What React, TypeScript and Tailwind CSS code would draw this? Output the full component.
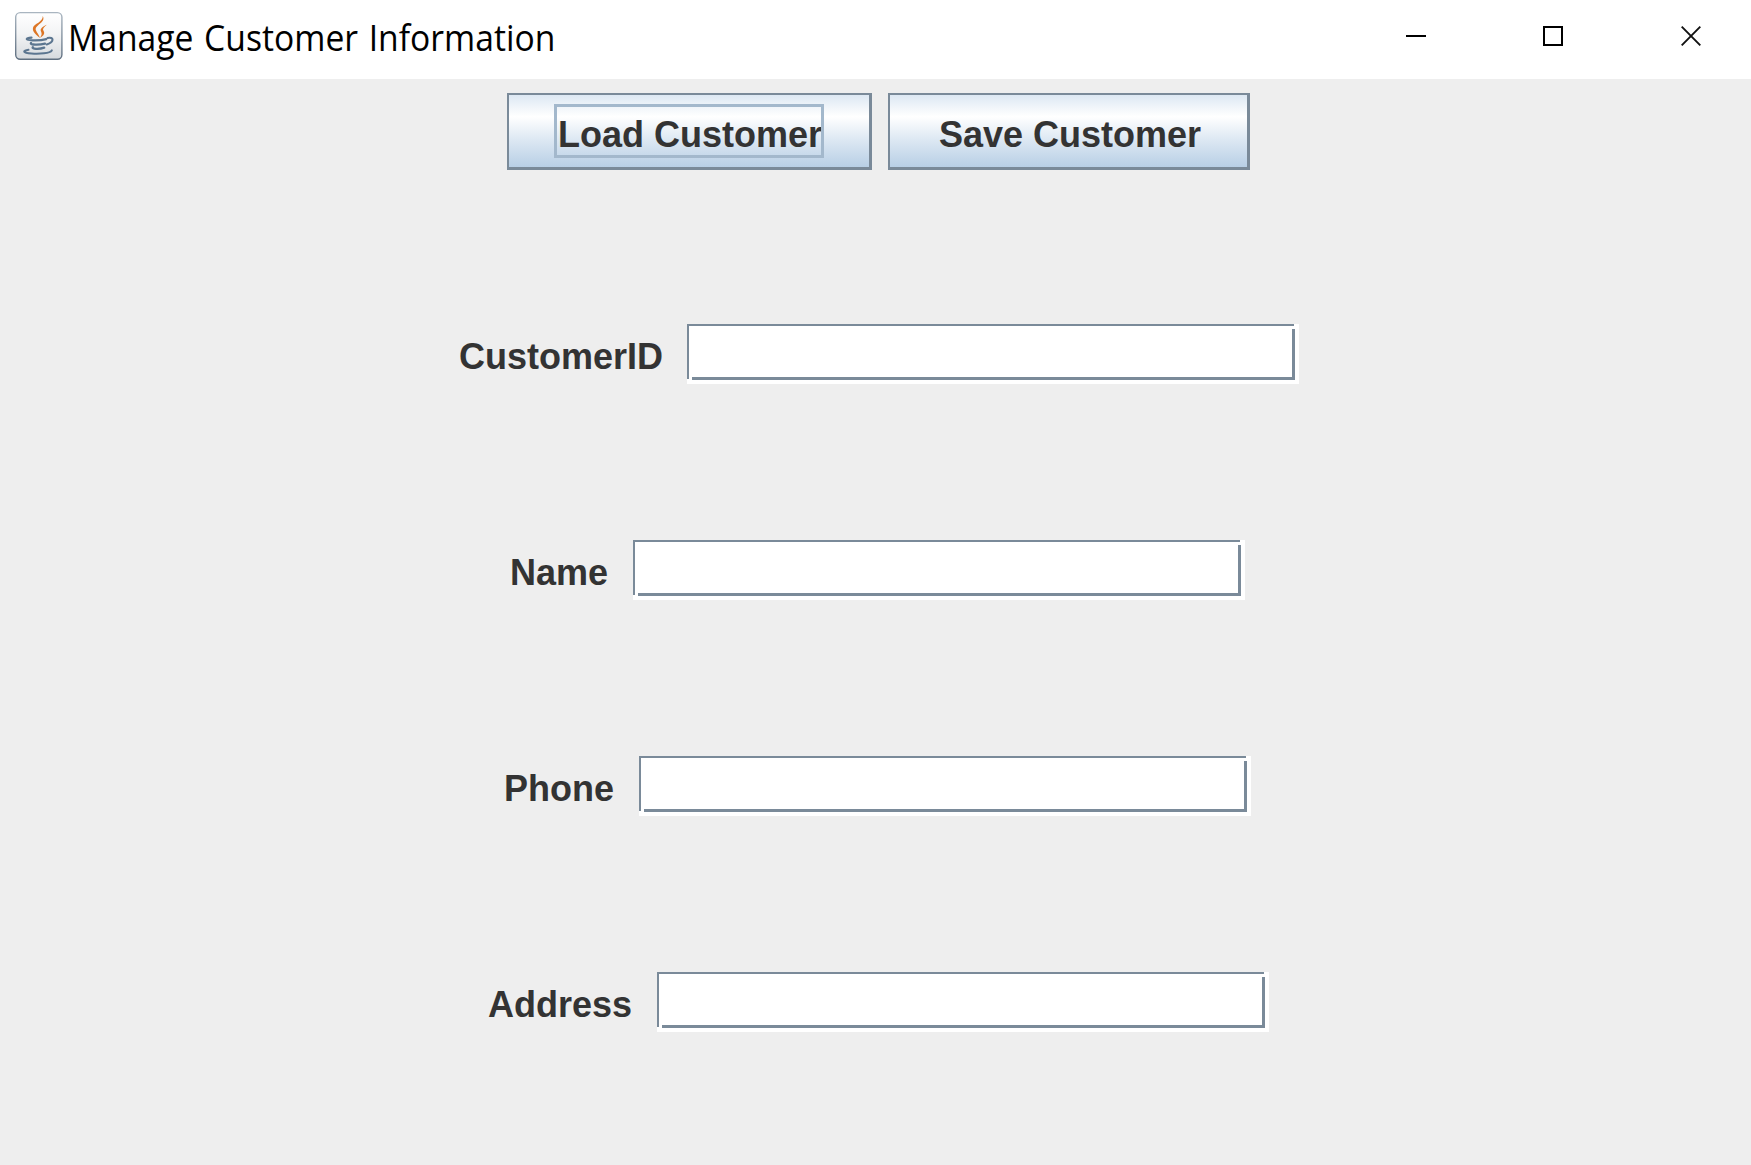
type FieldProps = { label: string; offset: string; labelWidth: string };

function JavaIcon() {
  return (
    <svg className="block h-[50px] w-[50px] shrink-0" viewBox="0 0 50 50" fill="none">
      <defs>
        <linearGradient id="tile" x1="0" y1="0" x2="0" y2="1">
          <stop offset="0" stopColor="#ffffff" />
          <stop offset="0.45" stopColor="#f3f4f5" />
          <stop offset="1" stopColor="#d6dade" />
        </linearGradient>
        <linearGradient id="edge" x1="0" y1="0" x2="0" y2="1">
          <stop offset="0" stopColor="#a9b5c0" />
          <stop offset="1" stopColor="#5f6f80" />
        </linearGradient>
      </defs>
      <rect x="1.7" y="1.6" width="46.2" height="46.6" rx="4.5" fill="url(#tile)" stroke="url(#edge)" strokeWidth="1.4" />
      <path d="M28.800 5c3.600 6.800-9.200 9.200-6.800 14.600 1 2.300 2.800 4.200 4 7.400-4.200-3.400-7.900-6.300-7-10.200.9-4.200 10.200-5.600 9.800-11.800Z" fill="#dd7626" />
      <path d="M32.800 13.800c-3.400 1.400-7.200 3.800-5.800 6.600 1 2 .9 3.600-1 6.400 4.200-2.200 5-4.600 3.500-7-1.300-2.100.9-4.200 3.300-6Z" fill="#dd7626" />
      <g stroke="#5c7690" strokeLinecap="round">
        <path d="M17.500 26.600c-7 .8-5.800 2.400.8 2.700 5.500.2 10.500-.2 14-1.200" strokeWidth="2.200" />
        <path d="M33.500 27c6.600-1.600 7 4-.8 6.400" strokeWidth="2.100" />
        <path d="M17 32c-1.600 2 8 2.300 14 .6" strokeWidth="2.300" />
        <path d="M18.800 36.200c-1.500 1.800 6.200 2.300 11.400.5" strokeWidth="2.300" />
        <path d="M14.500 38.800c-6 1-6.200 3 3 3.800 8 .6 18.500-.2 20.300-3.200" strokeWidth="2" />
      </g>
    </svg>
  );
}

function TitleBar() {
  return (
    <header className="flex h-[79px] bg-white">
      <div className="flex pt-[11px] pl-[14px]">
        <JavaIcon />
        <h1 className="ml-1 origin-left scale-x-[0.935] pt-[2px] font-['Open_Sans',sans-serif] text-[36px] leading-[50px] [word-spacing:2px] whitespace-nowrap text-black">
          Manage Customer Information
        </h1>
      </div>
      <div className="ml-auto flex h-[72px]">
        <button aria-label="Minimize" className="flex w-[137px] items-center justify-center">
          <span className="block h-[2px] w-5 bg-black" />
        </button>
        <button aria-label="Maximize" className="flex w-[137px] items-center justify-center">
          <span className="block h-5 w-5 border-2 border-black" />
        </button>
        <button aria-label="Close" className="ml-[10px] flex w-[120px] items-center justify-center">
          <svg className="h-5 w-5" viewBox="0 0 20 20" stroke="#111" strokeWidth="1.9">
            <path d="M.7.7l18.600 18.600M19.300.7.7 19.300" />
          </svg>
        </button>
      </div>
    </header>
  );
}

const buttonStyle =
  "flex h-[77px] border-t-2 border-r-3 border-b-3 border-l-2 border-[#7a8a99] bg-[linear-gradient(180deg,#dde8f3_0%,#ffffff_30%,#dde8f3_62%,#b8cfe5_100%)] text-[36px] font-bold whitespace-nowrap";

function Field({ label, offset, labelWidth }: FieldProps) {
  return (
    <label className={`flex h-[60px] ${offset}`}>
      <span className={`${labelWidth} shrink-0 pt-[13px] text-[36px] leading-[40px] font-bold`}>{label}</span>
      <span className="relative block h-[60px] w-[612px] bg-[#7a8a99]">
        <span className="absolute inset-0 bg-white [clip-path:polygon(2px_2px,607px_2px,607px_0,612px_0,612px_60px,0_60px,0_55px,2px_55px)]" />
        <span className="absolute top-[5px] right-1 bottom-1 left-[5px] border-r-3 border-b-3 border-[#7a8a99]" />
        <input aria-label={label} className="absolute top-[5px] right-[7px] bottom-[7px] left-[5px] px-1 text-[32px] font-normal outline-none" />
      </span>
    </label>
  );
}

export default function App() {
  return (
    <main className="flex h-[1165px] w-[1751px] flex-col overflow-hidden bg-[#eeeeee] font-['Liberation_Sans',sans-serif] text-[#333333]">
      <TitleBar />
      <div className="ml-[507px] flex gap-4 pt-[14px]">
        <button className={`${buttonStyle} w-[365px] pt-[9px] pl-[45px]`}>
          <span className="flex h-[54px] w-[270px] overflow-hidden border-3 border-[#a3b8cc] pt-[8px] pl-[1px] leading-[40px]">Load Customer</span>
        </button>
        <button className={`${buttonStyle} w-[362px] pt-[20px] pl-[49px] leading-[40px]`}>Save Customer</button>
      </div>
      <form className="mt-[154px] flex flex-col gap-[156px]">
        <Field label="CustomerID" offset="ml-[459px]" labelWidth="w-[228px]" />
        <Field label="Name" offset="ml-[510px]" labelWidth="w-[123px]" />
        <Field label="Phone" offset="ml-[504px]" labelWidth="w-[135px]" />
        <Field label="Address" offset="ml-[488px]" labelWidth="w-[169px]" />
      </form>
    </main>
  );
}
